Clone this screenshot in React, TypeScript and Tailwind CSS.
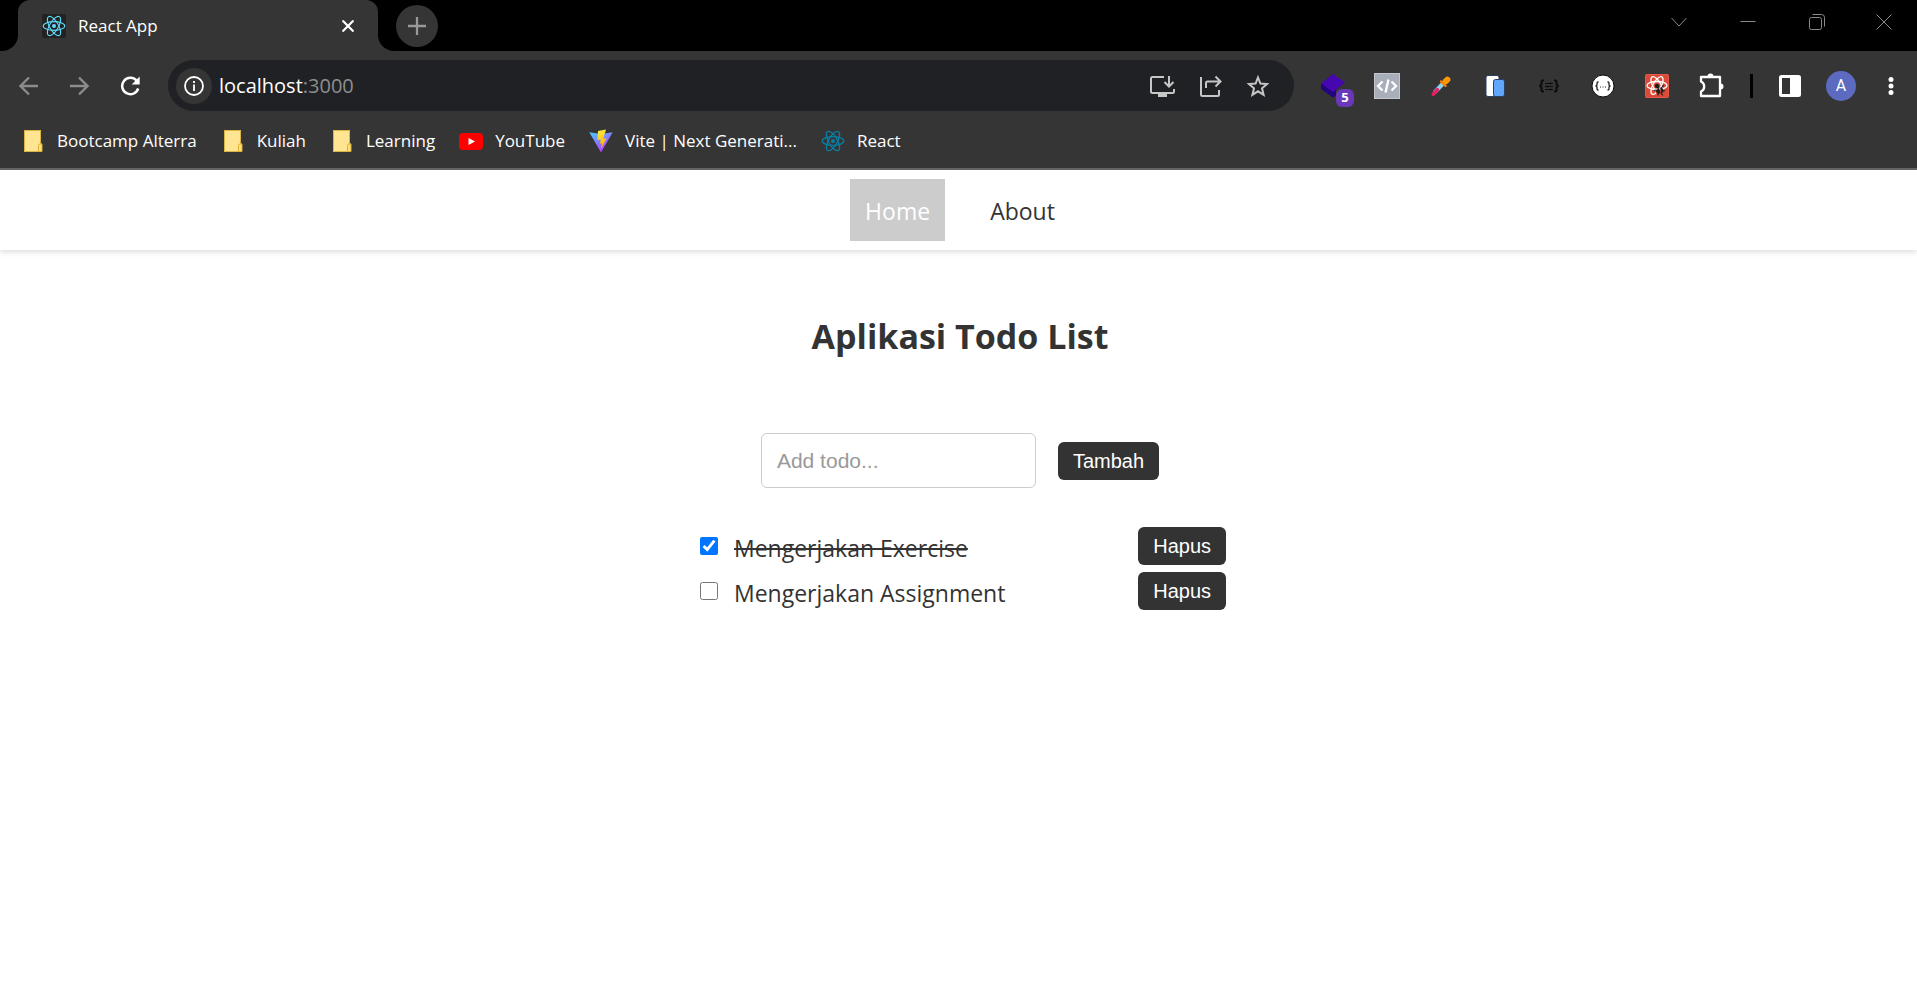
import { useState, type ReactNode } from "react";

const UI_FONT = "font-['Open_Sans','Noto_Sans',sans-serif]";

function ReactMark({ className, stroke = 1.3 }: { className: string; stroke?: number }) {
  return (
    <svg viewBox="0 0 24 24" className={className} fill="none" stroke="currentColor" strokeWidth={stroke} aria-hidden="true">
      <ellipse cx="12" cy="12" rx="10.8" ry="4.4" />
      <ellipse cx="12" cy="12" rx="10.8" ry="4.4" transform="rotate(60 12 12)" />
      <ellipse cx="12" cy="12" rx="10.8" ry="4.4" transform="rotate(120 12 12)" />
      <circle cx="12" cy="12" r="2" fill="currentColor" stroke="none" />
    </svg>
  );
}

function FolderIcon() {
  return (
    <svg viewBox="0 0 24 24" className="size-6" aria-hidden="true">
      <path d="M3 1h17v13.5h1V23H3z" fill="#ffe591" />
      <path d="M3 1.5h16.5V15M3.5 1v21.5h17.5" fill="none" stroke="#dcb440" />
      <path d="M17.5 22.5v-6q0-1.5 1.5-1.5h2v7.5z" fill="#ffe078" stroke="#e0b030" />
    </svg>
  );
}

function YouTubeIcon() {
  return (
    <svg viewBox="0 0 24 24" className="size-6" aria-hidden="true">
      <rect y="4" width="24" height="17" rx="4" fill="#f00" />
      <path d="M9.5 9v7l6.5-3.5z" fill="#fff" />
    </svg>
  );
}

function ViteIcon() {
  return (
    <svg viewBox="0 0 24 24" className="size-6" aria-hidden="true">
      <defs>
        <linearGradient id="vite-a" x1="0" y1="0" x2="0.6" y2="1">
          <stop offset="0" stopColor="#41d1ff" />
          <stop offset="1" stopColor="#bd34fe" />
        </linearGradient>
        <linearGradient id="vite-b" x1="0.4" y1="0" x2="0.6" y2="1">
          <stop offset="0" stopColor="#ffea3f" />
          <stop offset="1" stopColor="#ffa800" />
        </linearGradient>
      </defs>
      <path d="M.3 3.2 12 5l11.7-1.8L12 23.6z" fill="url(#vite-a)" />
      <path d="M17 .4 9 2l-.6 9 3.4-.6-.8 4.4 2-.5-1.2 6 5.8-11-3.3.5z" fill="url(#vite-b)" />
    </svg>
  );
}

function ArrowIcon({ flip = false }: { flip?: boolean }) {
  return (
    <svg viewBox="0 0 20 20" className={flip ? "size-5 rotate-180" : "size-5"} fill="none" stroke="#8c8c8c" strokeWidth="2.3" aria-hidden="true">
      <path d="M19 10H2M10 1.5 1.5 10l8.5 8.5" />
    </svg>
  );
}

function ReloadIcon() {
  return (
    <svg viewBox="0 0 20 20" className="size-5" aria-hidden="true">
      <path d="M18.2 12.500A8.200 8.200 0 1 1 16.500 4.500L18 6" fill="none" stroke="#fff" strokeWidth="2.500" />
      <path d="M19.700.5V8.500h-8z" fill="#fff" />
    </svg>
  );
}

function InfoIcon() {
  return (
    <svg viewBox="0 0 20 20" className="size-5" fill="none" stroke="#fff" strokeWidth="1.8" aria-hidden="true">
      <circle cx="10" cy="10" r="9" />
      <path d="M10 8.5V15M10 5v2" />
    </svg>
  );
}

function InstallIcon() {
  return (
    <svg viewBox="0 0 26 24" className="h-6 w-[26px]" fill="none" stroke="#c6c6c6" strokeWidth="2" aria-hidden="true">
      <path d="M15 3H3.5Q2 3 2 4.5v13Q2 19 3.5 19h20q1.500 0 1.500-1.500V15M20 2v10M15.500 8l4.500 4.500L24.500 8" />
      <path d="M9 19h9v4H9z" fill="#c6c6c6" stroke="none" />
    </svg>
  );
}

function ShareIcon() {
  return (
    <svg viewBox="0 0 24 24" className="size-6" fill="none" stroke="#c6c6c6" strokeWidth="2" aria-hidden="true">
      <path d="M3 3v17.5Q3 22 4.5 22h15q1.500 0 1.500-1.500V16M8 14V9q0-1.500 1.500-1.500H22M17.500 2.500l5 5-5 5" />
    </svg>
  );
}

function StarIcon() {
  return (
    <svg viewBox="0 0 24 24" className="size-6" fill="none" stroke="#c6c6c6" strokeWidth="2" aria-hidden="true">
      <path d="m12 3.5 2.4 6 6.600.5-5 4.300 1.600 6.500L12 17.300l-5.600 3.500L8 14.300 3 10l6.600-.5z" />
    </svg>
  );
}

function LayersIcon() {
  return (
    <svg viewBox="0 0 24 24" className="size-6" aria-hidden="true">
      <path d="M0 10v5l12 8.500 3-2V12z" fill="#21057d" />
      <path d="M12 0 24 8.500 12 18 0 9.500z" fill="#4707b0" />
    </svg>
  );
}

function CodeIcon() {
  return (
    <svg viewBox="0 0 26 26" className="size-[26px]" aria-hidden="true">
      <rect x=".5" y=".5" width="25" height="25" fill="#a9afba" stroke="#c3c7cd" />
      <path d="m8.500 8.500-4.500 4.500 4.500 4.500M17.500 8.500l4.500 4.500-4.500 4.500M14.500 6.500l-3 13" fill="none" stroke="#fff" strokeWidth="2.300" />
    </svg>
  );
}

function PickerIcon() {
  return (
    <svg viewBox="0 0 24 24" className="size-[22px]" strokeLinecap="round" aria-hidden="true">
      <path d="M5 19 14 9.500" stroke="#8fd0f5" strokeWidth="4.500" strokeLinecap="butt" />
      <path d="M3.500 21 8 16" stroke="#e91e63" strokeWidth="3.800" />
      <path d="M17 7l2-2" stroke="#ff9800" strokeWidth="6.500" />
      <path d="m12 7 5 5" stroke="#ff8000" strokeWidth="2.500" />
    </svg>
  );
}

function PagesIcon() {
  return (
    <svg viewBox="0 0 24 24" className="size-6" aria-hidden="true">
      <rect x="3" y="1.500" width="13" height="21" rx="2" fill="#fff" stroke="#2b3f63" />
      <rect x="10.500" y="5.500" width="11" height="17" rx="2" fill="#62a6fb" stroke="#2b3f63" />
    </svg>
  );
}

function BraceListIcon() {
  return (
    <svg viewBox="0 0 24 24" className="size-6" fill="none" stroke="#0c0c0c" strokeWidth="2" aria-hidden="true">
      <path d="M7 6.500H6Q4.500 6.500 4.500 8v2.500L3 12l1.500 1.500V16q0 1.500 1.500 1.500h1M17 6.500h1q1.500 0 1.500 1.500v2.500L21 12l-1.500 1.500V16q0 1.500-1.500 1.500h-1" />
      <path d="M8 9.500h8M8 12.500h8M8 15.500h8" strokeWidth="1.200" />
      <path d="M13.500 8.500v2M10.500 11.500v2M13.500 14.500v2" strokeWidth="1.200" />
    </svg>
  );
}

function BraceDotsIcon() {
  return (
    <svg viewBox="0 0 24 24" className="size-6" fill="none" stroke="#222" strokeWidth="1.300" aria-hidden="true">
      <circle cx="12" cy="12" r="11" fill="#fff" stroke="#0a0a0a" strokeWidth="1" />
      <path d="M7.500 8H7Q6 8 6 9v2l-1 1 1 1v2q0 1 1 1h.5M16.500 8h.5q1 0 1 1v2l1 1-1 1v2q0 1-1 1h-.5" />
      <path d="M9 13h1M11.500 13h1M14 13h1" strokeWidth="1" />
    </svg>
  );
}

function ReactDevIcon() {
  return (
    <svg viewBox="0 0 24 24" className="size-6" fill="none" aria-hidden="true">
      <rect x=".5" y=".5" width="23" height="23" rx="1" fill="#db4a38" stroke="#e35a48" />
      <g stroke="#fff" strokeWidth="1.300">
        <ellipse cx="12" cy="11.500" rx="10" ry="4" />
        <ellipse cx="12" cy="11.500" rx="10" ry="4" transform="rotate(60 12 11.500)" />
        <ellipse cx="12" cy="11.500" rx="10" ry="4" transform="rotate(120 12 11.500)" />
      </g>
      <path d="M11 16.500 20 15v7l-9 .5z" fill="#db4a38" />
      <circle cx="12" cy="12" r="2.200" fill="#1d1d1d" />
      <path d="m10.500 17 3.500-3.500 1.500 5.500-2 1zM15 13.500l2.500.5 1 4-2 1z" fill="#1d1d1d" />
      <path d="m11.500 16-2.500.5M13.500 18l-.5 3.500M16 18l1.500 3.500M17.500 16.500l2.500.5M16.500 14l2-3M14 13.500l-2-2" stroke="#1d1d1d" strokeWidth="1.200" />
    </svg>
  );
}

function PuzzleIcon() {
  return (
    <svg viewBox="0 0 26 26" className="size-[26px]" aria-hidden="true">
      <path d="M3 4h19v19H3v-4.500q3.200-1.500 3.200-5T3 8.500z" fill="none" stroke="#fff" strokeWidth="2.300" strokeLinejoin="round" />
      <path d="M9.500 3.500a3 3 0 0 1 6 0zM22.500 10.500a3 3 0 0 1 0 6z" fill="#fff" />
    </svg>
  );
}

function SidePanelIcon() {
  return (
    <svg viewBox="0 0 22 22" className="size-[22px]" aria-hidden="true">
      <rect x="1.500" y="1.500" width="19" height="19" rx="1" fill="none" stroke="#fff" strokeWidth="3" />
      <path d="M11 2h9v18h-9z" fill="#fff" />
    </svg>
  );
}

function MenuDotsIcon() {
  return (
    <svg viewBox="0 0 6 20" className="h-5 w-1.5" fill="#fff" aria-hidden="true">
      <circle cx="3" cy="3.500" r="2.500" />
      <circle cx="3" cy="10" r="2.500" />
      <circle cx="3" cy="16.500" r="2.500" />
    </svg>
  );
}

function WindowIcon({ d }: { d: string }) {
  return (
    <svg viewBox="0 0 16 16" className="size-4" fill="none" stroke="#8a8a8a" strokeWidth="1" aria-hidden="true">
      <path d={d} />
    </svg>
  );
}

const windowControls = [
  { label: "Search tabs", d: "M.5 4 8 12l7.500-8" },
  { label: "Minimize", d: "M.5 7.500h15" },
  { label: "Restore", d: "M2.500 3.500h8q2 0 2 2v8q0 2-2 2h-8q-2 0-2-2v-8q0-2 2-2zM3.500.5h9q3 0 3 3v9" },
  { label: "Close window", d: "m.5.5 15 15M15.500.5l-15 15" },
];

function TabStrip() {
  return (
    <div className="flex h-[51px] bg-black">
      <div className="h-[18px] w-[18px] self-end bg-[#353535]">
        <div className="h-full rounded-br-2xl bg-black" />
      </div>
      <div className="flex w-[360px] items-center rounded-t-xl bg-[#353535] pr-[18px] pl-6">
        <span className="rounded-xs bg-[#222]">
          <ReactMark className="size-6 text-[#61dafb]" stroke={1.1} />
        </span>
        <span className="ml-3 flex-1 text-[17px] text-white">React App</span>
        <button aria-label="Close tab" className="flex size-6 items-center justify-center">
          <svg viewBox="0 0 12 12" className="size-3" stroke="#fff" strokeWidth="2.200" aria-hidden="true">
            <path d="m.5.5 11 11M11.500.5l-11 11" />
          </svg>
        </button>
      </div>
      <div className="h-[18px] w-[18px] self-end bg-[#353535]">
        <div className="h-full rounded-bl-2xl bg-black" />
      </div>
      <button aria-label="New tab" className="flex size-[42px] items-center justify-center self-center rounded-full bg-[#353535]">
        <svg viewBox="0 0 18 18" className="size-[18px]" stroke="#999" strokeWidth="2.300" aria-hidden="true">
          <path d="M9 0v18M0 9h18" />
        </svg>
      </button>
      <div className="ml-auto flex h-[43px]">
        {windowControls.map((c) => (
          <button key={c.label} aria-label={c.label} className="flex w-[69px] items-center justify-center last:w-[66px]">
            <WindowIcon d={c.d} />
          </button>
        ))}
      </div>
    </div>
  );
}

function ToolButton({ label, className = "w-[54px]", children }: { label: string; className?: string; children: ReactNode }) {
  return (
    <button aria-label={label} className={`relative flex h-[51px] shrink-0 items-center justify-center ${className}`}>
      {children}
    </button>
  );
}

function Toolbar() {
  return (
    <div className="flex items-center pt-[9px] pl-1">
      <ToolButton label="Back" className="w-[50px]"><ArrowIcon /></ToolButton>
      <ToolButton label="Forward" className="w-[50px]"><ArrowIcon flip /></ToolButton>
      <ToolButton label="Reload" className="w-[52px]"><ReloadIcon /></ToolButton>
      <div className="mr-3 ml-3 flex h-[51px] flex-1 items-center rounded-full bg-[#202124] pr-3 pl-2">
        <button aria-label="Site information" className="flex size-9 items-center justify-center rounded-full bg-[#353535]">
          <InfoIcon />
        </button>
        <span className="ml-[7px] flex-1 text-[20px] text-white">
          localhost<span className="text-[#8e8e8e]">:3000</span>
        </span>
        <ToolButton label="Install app" className="w-12"><InstallIcon /></ToolButton>
        <ToolButton label="Share" className="w-12"><ShareIcon /></ToolButton>
        <ToolButton label="Bookmark" className="w-12"><StarIcon /></ToolButton>
      </div>
      <ToolButton label="Layers extension">
        <LayersIcon />
        <span className="absolute right-1.5 bottom-1 flex h-[18px] w-[18px] items-center justify-center rounded-md bg-[#6838b8] text-[13px] font-bold text-white">5</span>
      </ToolButton>
      <ToolButton label="Code extension"><CodeIcon /></ToolButton>
      <ToolButton label="Color picker"><PickerIcon /></ToolButton>
      <ToolButton label="Page copy"><PagesIcon /></ToolButton>
      <ToolButton label="JSON list"><BraceListIcon /></ToolButton>
      <ToolButton label="JSON viewer"><BraceDotsIcon /></ToolButton>
      <ToolButton label="React developer tools"><ReactDevIcon /></ToolButton>
      <ToolButton label="Extensions"><PuzzleIcon /></ToolButton>
      <div className="mr-2.5 ml-3 h-6 w-[3px] bg-black" />
      <ToolButton label="Side panel"><SidePanelIcon /></ToolButton>
      <ToolButton label="Profile" className="w-12">
        <span className="flex size-[30px] items-center justify-center rounded-full bg-[#5c6bc0] font-[Roboto,sans-serif] text-[16px] text-white">A</span>
      </ToolButton>
      <ToolButton label="Menu" className="w-[52px]"><MenuDotsIcon /></ToolButton>
    </div>
  );
}

const bookmarks: { label: string; icon: ReactNode }[] = [
  { label: "Bootcamp Alterra", icon: <FolderIcon /> },
  { label: "Kuliah", icon: <FolderIcon /> },
  { label: "Learning", icon: <FolderIcon /> },
  { label: "YouTube", icon: <YouTubeIcon /> },
  { label: "Vite | Next Generati...", icon: <ViteIcon /> },
  { label: "React", icon: <ReactMark className="size-6 text-[#087ea4]" /> },
];

function BookmarksBar() {
  return (
    <div className="flex h-[59px] items-center gap-6 border-b-2 border-[#666] px-[21px] pt-0.5">
      {bookmarks.map((b) => (
        <a key={b.label} href="#" className="flex items-center gap-3 text-[17px] whitespace-nowrap text-white">
          {b.icon}
          {b.label}
        </a>
      ))}
    </div>
  );
}

type Todo = { id: number; title: string; done: boolean };

function TodoApp() {
  const [todos, setTodos] = useState<Todo[]>([
    { id: 1, title: "Mengerjakan Exercise", done: true },
    { id: 2, title: "Mengerjakan Assignment", done: false },
  ]);
  const [title, setTitle] = useState("");
  const add = () => {
    if (!title.trim()) return;
    setTodos([...todos, { id: Date.now(), title, done: false }]);
    setTitle("");
  };
  const button = "h-[38px] rounded-md bg-[#333] px-[15px] font-['Liberation_Sans',sans-serif] text-[20px] text-white";
  return (
    <main className="flex flex-col items-center pl-[3px] text-[#333]">
      <h1 className="mt-[60px] text-[34px] leading-[52px] font-bold">Aplikasi Todo List</h1>
      <form className="mt-[71px] flex items-center gap-[22px]" onSubmit={(e) => { e.preventDefault(); add(); }}>
        <input
          aria-label="Todo"
          value={title}
          onChange={(e) => setTitle(e.target.value)}
          placeholder="Add todo..."
          className="h-[55px] w-[275px] rounded-md border border-[#ccc] px-[15px] font-['Liberation_Sans',sans-serif] text-[21px] placeholder:text-[#999]"
        />
        <button className={button}>Tambah</button>
      </form>
      <ul className="mt-[39px] flex w-full max-w-[532px] flex-col gap-[7px] pl-1.5">
        {todos.map((t) => (
          <li key={t.id} className="flex h-[38px] items-center">
            <input
              id={`todo-${t.id}`}
              type="checkbox"
              checked={t.done}
              onChange={() => setTodos(todos.map((x) => (x.id === t.id ? { ...x, done: !x.done } : x)))}
              className="size-[18px] accent-[#0075ff]"
            />
            <label htmlFor={`todo-${t.id}`} className={`ml-4 flex-1 pt-1 text-[23px] ${t.done ? "line-through" : ""}`}>
              {t.title}
            </label>
            <button className={button} onClick={() => setTodos(todos.filter((x) => x.id !== t.id))}>Hapus</button>
          </li>
        ))}
      </ul>
    </main>
  );
}

export default function App() {
  return (
    <div className={`min-h-screen bg-white ${UI_FONT}`}>
      <header className="bg-[#353535]">
        <TabStrip />
        <Toolbar />
        <BookmarksBar />
      </header>
      <nav className="flex justify-center gap-[30px] bg-white py-[9px] pl-[3px] text-[23px] shadow-[0_2px_6px_rgba(0,0,0,0.14)]">
        <a href="#" className="flex h-[62px] items-center bg-[#ccc] px-[15px] pt-0.5 text-white">Home</a>
        <a href="#" className="flex h-[62px] items-center px-[15px] pt-0.5 text-[#333]">About</a>
      </nav>
      <TodoApp />
    </div>
  );
}
